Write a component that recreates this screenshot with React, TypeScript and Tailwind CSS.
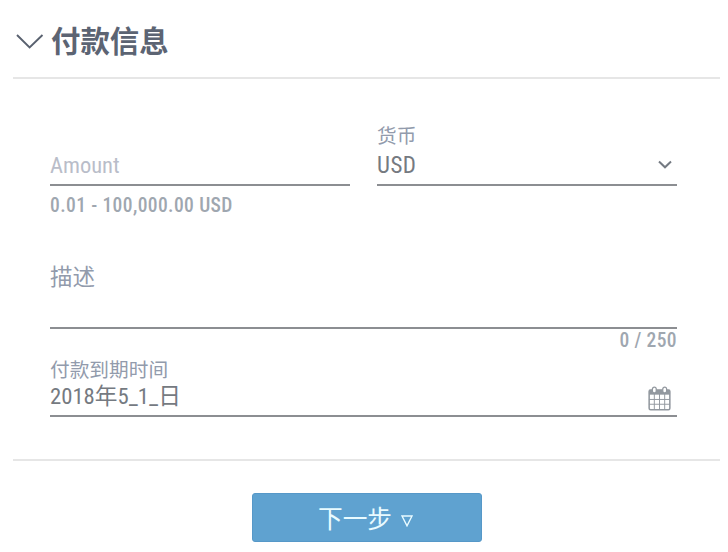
import { useState } from "react";

export default function App() {
  const [amount, setAmount] = useState("");

  return (
    <main className="h-[552px] w-[728px] overflow-hidden bg-white pl-[13px] pr-[8px] font-['Roboto_Condensed','Roboto','Noto_Sans_CJK_SC',sans-serif] font-stretch-condensed">
      <header className="flex h-[79px] items-center border-b-2 border-[#e6e6e6] pt-[7px]">
        <svg
          viewBox="0 0 28 16"
          className="ml-[3px] h-4 w-7 text-[#59616f]"
          fill="none"
          stroke="currentColor"
          strokeWidth="1.9"
        >
          <path d="M1 1 13.6 13.5 26.5 1" />
        </svg>
        <h1 className="ml-[7px] text-[29.4px] leading-10 font-bold text-[#5c6473]">
          付款信息
        </h1>
      </header>

      <section className="h-[382px] border-b-2 border-[#e6e6e6] pr-[43px] pl-[37px]">
        <div className="flex justify-between pt-[46px]">
          <div className="w-[300px]">
            <Label text="" />
            <div className="flex h-[38px] items-center border-b-2 border-[#8c8e92]">
              <input
                value={amount}
                onChange={(e) => setAmount(e.target.value)}
                placeholder="Amount"
                className="w-full text-[22.5px] text-[#757a81] outline-none placeholder:text-[#b9bdc9]"
              />
            </div>
            <p className="mt-[8px] text-[19.5px] leading-6 font-medium tracking-[0.4px] text-[#9fa7b0]">
              0.01 - 100,000.00 USD
            </p>
          </div>

          <div className="w-[300px]">
            <Label text="货币" />
            <div className="flex h-[38px] items-center justify-between border-b-2 border-[#8c8e92]">
              <span className="text-[23px] tracking-[0.5px] text-[#757a81]">
                USD
              </span>
              <svg
                viewBox="0 0 14 9"
                className="mr-[5px] mb-[3px] h-[9px] w-[14px] text-[#747a82]"
                fill="none"
                stroke="currentColor"
                strokeWidth="2"
              >
                <path d="M1 1.5 7 7.3 13 1.5" />
              </svg>
            </div>
          </div>
        </div>

        <div className="mt-[41px] h-[70px] border-b-2 border-[#8c8e92]">
          <span className="block text-[22.5px] leading-9 text-[#929bac]">
            描述
          </span>
        </div>
        <p className="text-right text-[19.5px] leading-[24px] font-medium tracking-[0.4px] text-[#9fa7b0]">
          0 / 250
        </p>

        <div className="mt-[6px]">
          <Label text="付款到期时间" />
          <div className="flex h-[35px] justify-between border-b-2 border-[#8c8e92]">
            <span className="text-[22.7px] leading-[29px] text-[#757a81]">
              2018年5_1_日
            </span>
            <CalendarIcon />
          </div>
        </div>
      </section>

      <button
        type="button"
        className="mt-[32px] ml-[239px] flex h-[49px] w-[230px] items-center justify-center gap-[9px] rounded-[3px] border border-[#5698c8] bg-[#5fa2d0] pt-[4px] pr-[3px] text-[24.7px] text-[#e9fbff]"
      >
        <span>下一步</span>
        <svg
          viewBox="0 0 12 12"
          className="mt-[3px] size-3"
          fill="none"
          stroke="currentColor"
          strokeWidth="1.4"
        >
          <path d="M1 1H11L6 10.8Z" />
        </svg>
      </button>
    </main>
  );
}

function Label({ text }: { text: string }) {
  return (
    <span className="block h-[23px] text-[19.7px] leading-[23px] text-[#929bac]">
      {text}
    </span>
  );
}

function CalendarIcon() {
  return (
    <svg
      viewBox="0 0 24 26"
      className="mt-[4px] mr-[6px] h-[25px] w-[23px] text-[#92989f]"
      fill="none"
      stroke="currentColor"
    >
      <rect x="1.2" y="4.2" width="21.6" height="20.6" rx="1.5" strokeWidth="1.6" />
      <path d="M1 4h22v5H1z" fill="currentColor" stroke="none" />
      <path d="M1 14h22M1 19h22M6.6 8v17M12 8v17M17.4 8v17" />
      <rect x="4.6" y="1.2" width="4" height="6" rx="2" fill="white" strokeWidth="1.3" />
      <rect x="15.4" y="1.2" width="4" height="6" rx="2" fill="white" strokeWidth="1.3" />
    </svg>
  );
}
